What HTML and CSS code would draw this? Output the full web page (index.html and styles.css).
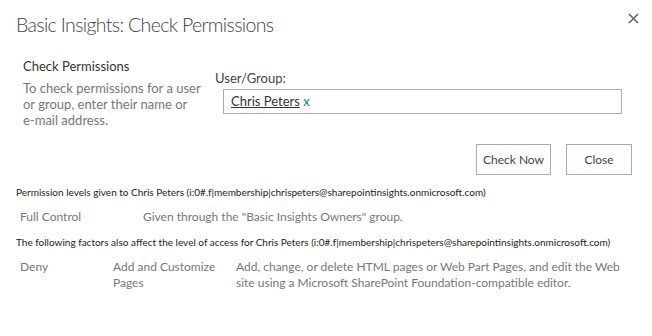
FILE: index.html
```html
<html lang="en">
<head>
    <meta charset="UTF-8">
    <title>Check Permissions</title>
    <link rel="stylesheet" href="styles.css">
</head>
<body>
    <div class="dialog">
        <div class="dialog-header">
            <h1 class="dialog-title">Basic Insights: Check Permissions</h1>
            <span class="dialog-close">
                <svg width="11" height="11" viewBox="0 0 11 11"><path d="M1 1 L10 10 M10 1 L1 10" stroke="#666" stroke-width="1.6"/></svg>
            </span>
        </div>

        <div class="check-section">
            <div class="section-info">
                <h3 class="section-head">Check Permissions</h3>
                <p class="section-desc">To check permissions for a user<br>or group, enter their name or<br>e-mail address.</p>
            </div>
            <div class="section-field">
                <label class="field-label">User/Group:</label>
                <div class="people-box">
                    <span class="people-name">Chris Peters</span> <span class="people-remove">x</span>
                </div>
            </div>
        </div>

        <div class="button-row">
            <button class="btn">Check Now</button>
            <button class="btn btn-close">Close</button>
        </div>

        <div class="results">
            <div class="result-head">Permission levels given to Chris Peters (i:0#.f|membership|chrispeters@sharepointinsights.onmicrosoft.com)</div>
            <div class="result-row">
                <div class="col-level">Full Control</div>
                <div class="col-desc">Given through the "Basic Insights Owners" group.</div>
            </div>

            <div class="result-head">The following factors also affect the level of access for Chris Peters (i:0#.f|membership|chrispeters@sharepointinsights.onmicrosoft.com)</div>
            <div class="result-row">
                <div class="col-level col-deny">Deny</div>
                <div class="col-perm">Add and Customize Pages</div>
                <div class="col-note">Add, change, or delete HTML pages or Web Part Pages, and edit the Web site using a Microsoft SharePoint Foundation-compatible editor.</div>
            </div>
        </div>
    </div>
</body>
</html>
```

FILE: styles.css
```css
body{
    margin: 0;
    padding: 0;
    background-color: #fff;
    font-family: Lato, "Open Sans", sans-serif;
    color: #444;
}

.dialog{
    padding: 0 16px;
}

.dialog-header{
    display: flex;
    justify-content: space-between;
    align-items: flex-start;
}
.dialog-title{
    margin: 11px 0 0 0;
    font-size: 19.5px;
    line-height: 28px;
    font-weight: 300;
    letter-spacing: -0.65px;
    color: #444;
}
.dialog-close{
    margin-top: 13px;
    margin-right: -3px;
    line-height: 0;
}

.check-section{
    display: flex;
    margin-top: 19px;
}
.section-info{
    width: 175px;
    flex-shrink: 0;
    padding-left: 7px;
}
.section-head{
    margin: 0;
    font-size: 13px;
    font-weight: 400;
    color: #333;
    line-height: 17px;
}
.section-desc{
    margin: 5px 0 0 0;
    font-size: 13px;
    line-height: 16px;
    color: #777;
    white-space: nowrap;
}
.section-field{
    flex: 1;
    padding-top: 12px;
    padding-left: 17px;
}
.field-label{
    display: block;
    font-size: 13px;
    color: #444;
    line-height: 16px;
}
.people-box{
    margin: 3px 14px 0 8px;
    height: 23px;
    border: 1px solid #ababab;
    padding-left: 7px;
    font-size: 13px;
    line-height: 23px;
}
.people-name{
    color: #333;
    text-decoration: underline;
}
.people-remove{
    color: #0e7c86;
}

.button-row{
    display: flex;
    justify-content: flex-end;
    gap: 15px;
    margin-top: 16px;
    padding-right: 4px;
}
.btn{
    font-family: Lato, "Open Sans", sans-serif;
    font-size: 12px;
    color: #444;
    background-color: #fdfdfd;
    border: 1px solid #ababab;
    height: 31px;
    padding: 0 6px;
    min-width: 66px;
}

.results{
    margin-top: 9px;
}
.result-head{
    font-size: 10px;
    color: #222;
    line-height: 16px;
    white-space: nowrap;
}
.result-row{
    display: flex;
    padding: 9px 0 9px 4px;
    font-size: 12px;
    line-height: 16px;
    color: #777;
}
.col-level{
    width: 123px;
}
.col-deny{
    width: 93px;
}
.col-perm{
    width: 123px;
}
.col-note{
    max-width: 392px;
}
```
